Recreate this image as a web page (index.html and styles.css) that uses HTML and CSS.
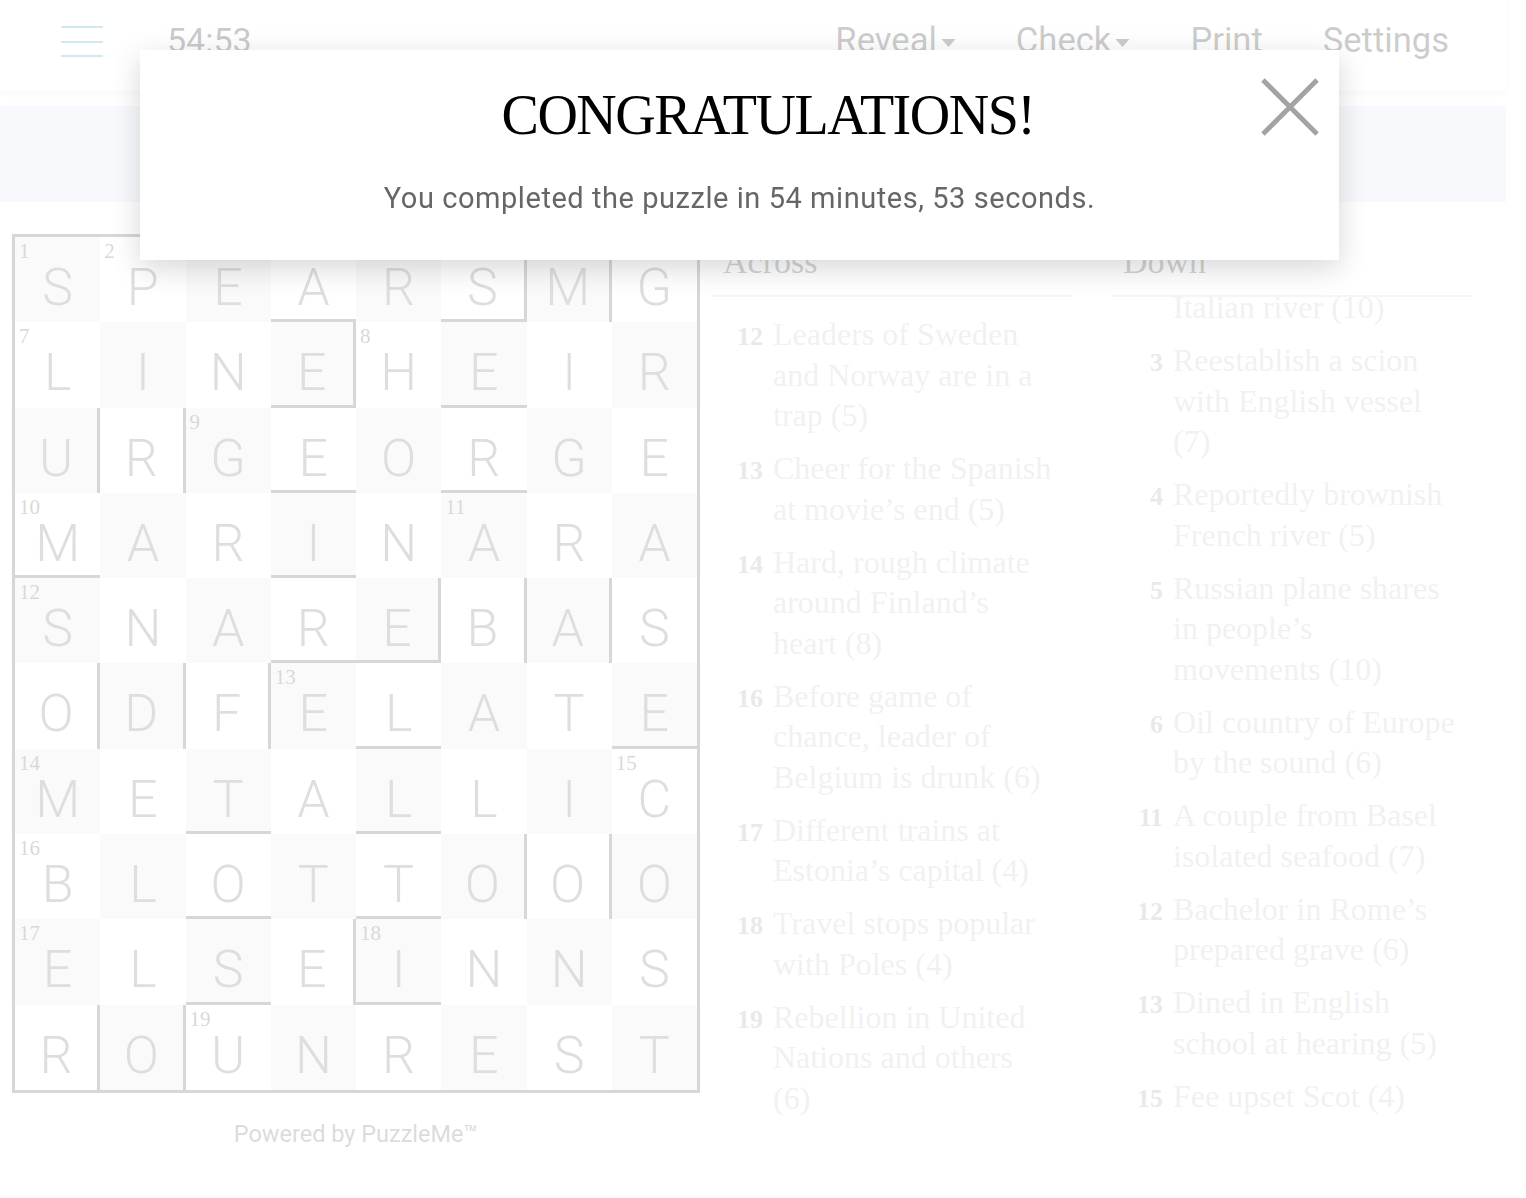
FILE: index.html
```html
<!DOCTYPE html>
<html lang="en">
<head>
<meta charset="utf-8">
<title>Crossword</title>
<link rel="stylesheet" href="styles.css">
</head>
<body>
<header class="topbar">
  <div class="menu-btn"><span></span><span></span><span></span></div>
  <div class="timer">54:53</div>
  <nav class="nav">
    <span class="nav-item">Reveal<svg class="caret" viewBox="0 0 14 8"><path d="M0 0 L14 0 L7 8 Z"/></svg></span>
    <span class="nav-item">Check<svg class="caret" viewBox="0 0 14 8"><path d="M0 0 L14 0 L7 8 Z"/></svg></span>
    <span class="nav-item">Print</span>
    <span class="nav-item">Settings</span>
  </nav>
</header>
<div class="clue-bar"></div>
<main class="main">
  <section class="puzzle">
    <div class="grid">
      <div class="cell s"><span class="num">1</span>S</div>
      <div class="cell"><span class="num">2</span>P</div>
      <div class="cell s"><span class="num">3</span>E</div>
      <div class="cell bb">A</div>
      <div class="cell s"><span class="num">4</span>R</div>
      <div class="cell bb br">S</div>
      <div class="cell s br"><span class="num">5</span>M</div>
      <div class="cell"><span class="num">6</span>G</div>

      <div class="cell"><span class="num">7</span>L</div>
      <div class="cell s">I</div>
      <div class="cell">N</div>
      <div class="cell s bb br">E</div>
      <div class="cell"><span class="num">8</span>H</div>
      <div class="cell s bb">E</div>
      <div class="cell">I</div>
      <div class="cell s">R</div>

      <div class="cell s br">U</div>
      <div class="cell br">R</div>
      <div class="cell s"><span class="num">9</span>G</div>
      <div class="cell bb">E</div>
      <div class="cell s">O</div>
      <div class="cell bb">R</div>
      <div class="cell s">G</div>
      <div class="cell">E</div>

      <div class="cell bb"><span class="num">10</span>M</div>
      <div class="cell s">A</div>
      <div class="cell">R</div>
      <div class="cell s bb">I</div>
      <div class="cell">N</div>
      <div class="cell s"><span class="num">11</span>A</div>
      <div class="cell">R</div>
      <div class="cell s">A</div>

      <div class="cell s"><span class="num">12</span>S</div>
      <div class="cell">N</div>
      <div class="cell s">A</div>
      <div class="cell bb">R</div>
      <div class="cell s bb br">E</div>
      <div class="cell br">B</div>
      <div class="cell s br">A</div>
      <div class="cell">S</div>

      <div class="cell br">O</div>
      <div class="cell s br">D</div>
      <div class="cell br">F</div>
      <div class="cell s"><span class="num">13</span>E</div>
      <div class="cell bb">L</div>
      <div class="cell s">A</div>
      <div class="cell">T</div>
      <div class="cell s bb">E</div>

      <div class="cell s"><span class="num">14</span>M</div>
      <div class="cell">E</div>
      <div class="cell s bb">T</div>
      <div class="cell">A</div>
      <div class="cell s bb">L</div>
      <div class="cell">L</div>
      <div class="cell s">I</div>
      <div class="cell"><span class="num">15</span>C</div>

      <div class="cell"><span class="num">16</span>B</div>
      <div class="cell s">L</div>
      <div class="cell bb">O</div>
      <div class="cell s">T</div>
      <div class="cell bb">T</div>
      <div class="cell s br">O</div>
      <div class="cell br">O</div>
      <div class="cell s">O</div>

      <div class="cell s"><span class="num">17</span>E</div>
      <div class="cell">L</div>
      <div class="cell s bb">S</div>
      <div class="cell br">E</div>
      <div class="cell s bb"><span class="num">18</span>I</div>
      <div class="cell">N</div>
      <div class="cell s">N</div>
      <div class="cell">S</div>

      <div class="cell br">R</div>
      <div class="cell s br">O</div>
      <div class="cell"><span class="num">19</span>U</div>
      <div class="cell s">N</div>
      <div class="cell">R</div>
      <div class="cell s">E</div>
      <div class="cell">S</div>
      <div class="cell s">T</div>
    </div>
    <p class="powered">Powered by PuzzleMe™</p>
  </section>

  <section class="clues">
    <div class="clue-col">
      <h2 class="clue-head">Across</h2>
      <div class="clue-scroll">
        <ol class="clue-list across">
          <li class="clue"><b class="cn">12</b><span class="ct">Leaders of Sweden and Norway are in a trap (5)</span></li>
          <li class="clue"><b class="cn">13</b><span class="ct">Cheer for the Spanish at movie’s end (5)</span></li>
          <li class="clue"><b class="cn">14</b><span class="ct">Hard, rough climate around Finland’s heart (8)</span></li>
          <li class="clue"><b class="cn">16</b><span class="ct">Before game of chance, leader of Belgium is drunk (6)</span></li>
          <li class="clue"><b class="cn">17</b><span class="ct">Different trains at Estonia’s capital (4)</span></li>
          <li class="clue"><b class="cn">18</b><span class="ct">Travel stops popular with Poles (4)</span></li>
          <li class="clue"><b class="cn">19</b><span class="ct">Rebellion in United Nations and others (6)</span></li>
        </ol>
      </div>
    </div>
    <div class="clue-col">
      <h2 class="clue-head">Down</h2>
      <div class="clue-scroll">
        <ol class="clue-list down">
          <li class="clue"><b class="cn"></b><span class="ct">Italian river (10)</span></li>
          <li class="clue"><b class="cn">3</b><span class="ct">Reestablish a scion with English vessel (7)</span></li>
          <li class="clue"><b class="cn">4</b><span class="ct">Reportedly brownish French river (5)</span></li>
          <li class="clue"><b class="cn">5</b><span class="ct">Russian plane shares in people’s movements (10)</span></li>
          <li class="clue"><b class="cn">6</b><span class="ct">Oil country of Europe by the sound (6)</span></li>
          <li class="clue"><b class="cn">11</b><span class="ct">A couple from Basel isolated seafood (7)</span></li>
          <li class="clue"><b class="cn">12</b><span class="ct">Bachelor in Rome’s prepared grave (6)</span></li>
          <li class="clue"><b class="cn">13</b><span class="ct">Dined in English school at hearing (5)</span></li>
          <li class="clue"><b class="cn">15</b><span class="ct">Fee upset Scot (4)</span></li>
        </ol>
      </div>
    </div>
  </section>
</main>

<div class="overlay"></div>
<div class="modal">
  <h1 class="modal-title">CONGRATULATIONS!</h1>
  <p class="modal-text">You completed the puzzle in 54 minutes, 53 seconds.</p>
  <svg class="modal-close" viewBox="0 0 60 60"><path d="M2 2 L58 58 M58 2 L2 58"/></svg>
</div>
</body>
</html>
```

FILE: styles.css
```css
* { box-sizing: border-box; }

body {
  margin: 0;
  background: #fff;
  font-family: Roboto, "Liberation Sans", Arial, sans-serif;
  width: 1526px;
  height: 1198px;
  overflow: hidden;
}

/* ---------- top bar ---------- */
.topbar {
  width: 1506px;
  height: 91px;
  display: flex;
  align-items: flex-start;
  padding-top: 20px;
  background: #fff;
  border-bottom-right-radius: 6px;
  box-shadow: 0 2px 8px rgba(0, 0, 0, 0.14);
  position: relative;
  z-index: 1;
}

.menu-btn {
  width: 42px;
  margin-left: 61px;
  margin-top: 6px;
  display: flex;
  flex-direction: column;
  gap: 12.5px;
}
.menu-btn span {
  display: block;
  height: 2px;
  background: #2f9ccb;
}

.timer {
  margin-left: 64px;
  font-size: 34px;
  line-height: 40px;
  color: #111;
}

.nav {
  margin-left: auto;
  padding-right: 57px;
  display: flex;
  gap: 60px;
}
.nav-item {
  font-size: 34.6px;
  line-height: 40px;
  color: #1a1a1a;
  display: flex;
  align-items: center;
}
.caret {
  width: 15px;
  height: 8px;
  margin-left: 4px;
  margin-top: 6px;
  fill: #1a1a1a;
}

/* ---------- clue bar ---------- */
.clue-bar {
  width: 1506px;
  height: 96px;
  margin-top: 15px;
  background: #dfe4f0;
}

/* ---------- main ---------- */
.main {
  display: flex;
  align-items: flex-start;
  margin-top: 32px;
  padding-left: 12px;
}

.puzzle {
  width: 688px;
}

.grid {
  display: grid;
  grid-template-columns: repeat(8, 85.25px);
  grid-template-rows: repeat(10, 85.3px);
  border: 3px solid #4a4a4a;
}

.cell {
  position: relative;
  display: flex;
  justify-content: center;
  align-items: flex-start;
  padding-top: 20px;
  background: #fff;
  border: 0 solid #4a4a4a;
  font-size: 52px;
  font-weight: 300;
  line-height: 61px;
  color: #6a6a6a;
}
.cell.s { background: #e6e6e6; }
.cell.br { border-right-width: 3px; }
.cell.bb { border-bottom-width: 3px; }

.num {
  position: absolute;
  left: 4px;
  top: 2px;
  font-family: "Liberation Serif", "Times New Roman", serif;
  font-size: 21px;
  font-weight: normal;
  line-height: 24px;
  color: #4d4d4d;
}

.powered {
  margin: 28px 0 0;
  text-align: center;
  font-size: 23.5px;
  line-height: 26px;
  color: #5c5c5c;
}

/* ---------- clues ---------- */
.clues {
  margin-left: 12px;
  display: flex;
  gap: 40px;
}

.clue-col {
  width: 360px;
}

.clue-head {
  margin: 0;
  padding: 8px 0 13px 11px;
  font-family: "Liberation Serif", "Times New Roman", serif;
  font-weight: normal;
  font-size: 34px;
  line-height: 40px;
  color: #3d3d3d;
  border-bottom: 2px solid #cfcfcf;
}

.clue-scroll {
  height: 823px;
  overflow: hidden;
}

.clue-list {
  list-style: none;
  margin: 0;
  padding: 17px 16px 0 0;
}
.clue-list.down {
  padding-top: 0;
  margin-top: -10px;
}

.clue {
  display: flex;
  align-items: baseline;
  margin-bottom: 12.5px;
  font-family: "Liberation Serif", "Times New Roman", serif;
}

.cn {
  flex: 0 0 51px;
  text-align: right;
  font-size: 26px;
  font-weight: bold;
  color: #9a9a9a;
}

.ct {
  margin-left: 10px;
  font-size: 32px;
  line-height: 40.5px;
  color: #bdbdbd;
}

/* ---------- overlay + modal ---------- */
.overlay {
  position: fixed;
  inset: 0;
  background: rgba(255, 255, 255, 0.78);
  z-index: 5;
}

.modal {
  position: fixed;
  left: 140px;
  top: 50px;
  width: 1199px;
  height: 210px;
  background: #fff;
  z-index: 6;
  box-shadow: 0 8px 28px rgba(0, 0, 0, 0.16);
  text-align: center;
  padding-top: 33px;
}

.modal-title {
  margin: 0;
  padding-left: 57px;
  font-family: "Liberation Serif", "Times New Roman", serif;
  font-weight: normal;
  font-size: 56px;
  line-height: 64px;
  letter-spacing: -1.5px;
  color: #000;
}

.modal-text {
  margin: 34px 0 0;
  font-size: 29px;
  line-height: 34px;
  letter-spacing: 0.55px;
  color: #666;
}

.modal-close {
  position: absolute;
  left: 1121px;
  top: 28px;
  width: 58px;
  height: 58px;
  stroke: #a3a3a3;
  stroke-width: 5;
  fill: none;
}
```
